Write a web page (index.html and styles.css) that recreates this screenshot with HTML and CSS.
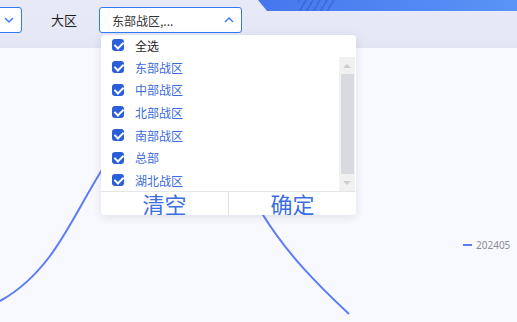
FILE: index.html
```html
<!DOCTYPE html>
<html lang="zh-CN">
<head>
    <meta charset="UTF-8">
    <meta name="viewport" content="width=device-width, initial-scale=1.0">
    <title>大区筛选</title>
    <link rel="stylesheet" href="styles.css">
</head>
<body>
    <div class="page">
        <header class="top">
            <div class="banner"><span class="stripes"></span></div>
            <div class="filters">
                <div class="select select-first">
                    <svg class="arrow" width="10" height="6" viewBox="0 0 10 6"><path d="M1 1 L5 5 L9 1" fill="none" stroke="#2f7cf5" stroke-width="1.4"/></svg>
                </div>
                <span class="label">大区</span>
                <div class="select select-region">
                    <span class="value">东部战区,...</span>
                    <svg class="arrow" width="10" height="6" viewBox="0 0 10 6"><path d="M1 5 L5 1 L9 5" fill="none" stroke="#2f7cf5" stroke-width="1.4"/></svg>
                </div>
            </div>
        </header>

        <main class="chart">
            <svg class="line" width="517" height="274" viewBox="0 48 517 274">
                <path d="M0 301 C20 290 35 276 50 256 C70 229 85 196 105 165 C140 110 165 70 185 70 C210 70 235 170 263 215 C288 255 318 285 349 314" fill="none" stroke="#5b7cf6" stroke-width="2"/>
            </svg>
            <div class="legend"><span class="legend-mark"></span>202405</div>
        </main>

        <div class="dropdown">
            <div class="option option-all">
                <span class="check"></span>全选
            </div>
            <div class="list">
                <ul class="items">
                    <li class="option"><span class="check"></span>东部战区</li>
                    <li class="option"><span class="check"></span>中部战区</li>
                    <li class="option"><span class="check"></span>北部战区</li>
                    <li class="option"><span class="check"></span>南部战区</li>
                    <li class="option"><span class="check"></span>总部</li>
                    <li class="option"><span class="check"></span>湖北战区</li>
                </ul>
                <div class="scrollbar">
                    <span class="scroll-btn up"></span>
                    <span class="thumb"></span>
                    <span class="scroll-btn down"></span>
                </div>
            </div>
            <div class="actions">
                <button class="action">清空</button>
                <button class="action">确定</button>
            </div>
        </div>
    </div>
</body>
</html>
```

FILE: styles.css
```css
*{
    margin: 0;
    padding: 0;
    box-sizing: border-box;
    list-style: none;
}

body{
    font-family: "Noto Sans CJK SC", "Noto Sans", sans-serif;
    background-color: #f8f9fe;
    overflow: hidden;
}

.page{
    width: 517px;
    height: 322px;
    position: relative;
    overflow: hidden;
}

.top{
    height: 48px;
    background: linear-gradient(180deg, #e8e9f6 0%, #e7e8f5 75%, #e3e4f2 100%);
    position: relative;
}

.banner{
    position: absolute;
    top: 0;
    left: 258px;
    right: 0;
    height: 11px;
    background: linear-gradient(90deg, #4676ee, #5a94f6);
    clip-path: polygon(0 0, 100% 0, 100% 100%, 9px 100%);
}

.stripes{
    position: absolute;
    left: 40px;
    top: 0;
    width: 36px;
    height: 11px;
    background: repeating-linear-gradient(120deg, rgba(40, 80, 190, 0.35) 0 2px, transparent 2px 6px);
}

.filters{
    display: flex;
    align-items: center;
    padding-top: 7px;
}

.select{
    height: 26px;
    background-color: #fff;
    border: 1px solid #2f7cf5;
    border-radius: 3px;
    display: flex;
    align-items: center;
}

.select-first{
    width: 62px;
    margin-left: -40px;
    justify-content: flex-end;
    padding-right: 7px;
}

.label{
    margin-left: 29px;
    font-size: 13px;
    color: #1d1d1f;
    line-height: 26px;
}

.select-region{
    width: 143px;
    margin-left: 22px;
    padding: 0 7px 0 12px;
    justify-content: space-between;
}

.value{
    font-size: 12px;
    color: #333;
}

.arrow{
    display: block;
}

.chart{
    height: 274px;
    position: relative;
}

.line{
    display: block;
}

.legend{
    position: absolute;
    left: 463px;
    top: 190px;
    display: flex;
    align-items: center;
    font-family: "Noto Sans", sans-serif;
    font-size: 10px;
    color: #8a8d96;
}

.legend-mark{
    width: 9px;
    height: 2px;
    background-color: #5b7cf6;
    margin-right: 4px;
}

.dropdown{
    position: absolute;
    left: 101px;
    top: 35px;
    width: 255px;
    height: 180px;
    background-color: #fff;
    border-radius: 4px;
    box-shadow: 0 2px 10px rgba(60, 70, 110, 0.14);
    display: flex;
    flex-direction: column;
    overflow: hidden;
}

.option{
    display: flex;
    align-items: center;
    height: 22.6px;
    padding-left: 11px;
    font-size: 12px;
    color: #3b6cdb;
}

.option-all{
    height: 22px;
    padding-bottom: 2px;
    color: #1d1d1f;
}

.check{
    width: 12px;
    height: 12px;
    margin-right: 11px;
    border-radius: 3px;
    background-color: #2b5fd9;
    position: relative;
}

.check::after{
    content: "";
    position: absolute;
    left: 2px;
    top: 2px;
    width: 7px;
    height: 4px;
    border-left: 2.6px solid #fff;
    border-bottom: 2.6px solid #fff;
    transform: translate(0.5px, 0.5px) rotate(-45deg);
}

.list{
    height: 134px;
    display: flex;
}

.items{
    flex: 1;
    margin-top: -1px;
    overflow: hidden;
}

.scrollbar{
    width: 16px;
    margin-right: 1px;
    background-color: #f1f1f1;
    display: flex;
    flex-direction: column;
    align-items: center;
}

.scroll-btn{
    height: 17px;
    width: 16px;
    position: relative;
}

.scroll-btn::after{
    content: "";
    position: absolute;
    left: 4px;
    border-left: 4px solid transparent;
    border-right: 4px solid transparent;
}

.up::after{
    top: 7px;
    border-bottom: 4px solid #cdcdcd;
}

.down::after{
    top: 7px;
    border-top: 4px solid #cdcdcd;
}

.thumb{
    flex: 1;
    width: 13px;
    margin-left: 1px;
    background-color: #d8dadf;
}

.actions{
    flex: 1;
    display: flex;
    border-top: 1px solid #e4e6eb;
}

.action{
    flex: 1;
    border: none;
    background: none;
    font-family: "Noto Sans CJK SC", sans-serif;
    font-size: 22px;
    line-height: 20px;
    padding-bottom: 2px;
    color: #3c6fe2;
}

.action + .action{
    border-left: 1px solid #dcdfe6;
}
```
